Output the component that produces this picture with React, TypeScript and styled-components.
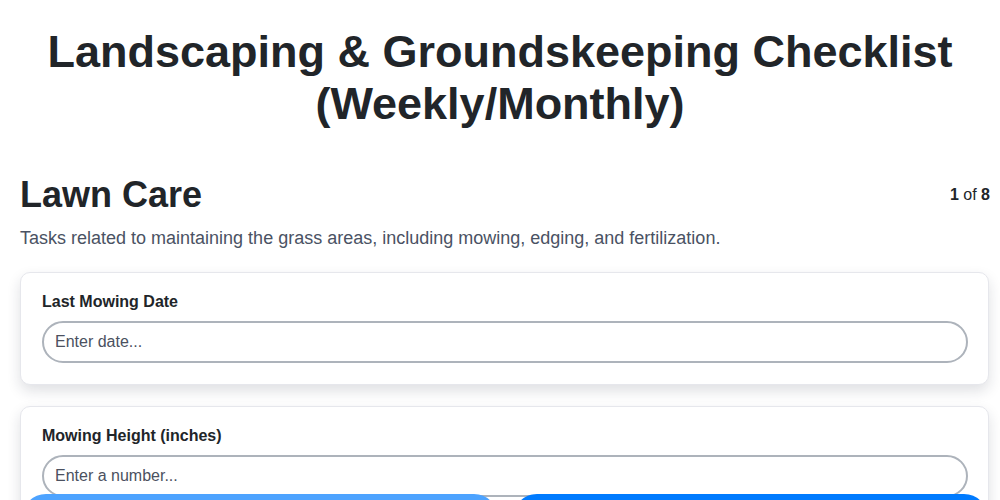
import React from 'react';
import styled, { createGlobalStyle } from 'styled-components';

const GlobalStyle = createGlobalStyle`
	* {
		box-sizing: border-box;
	}

	body {
		margin: 0;
		background: #ffffff;
		font-family: "Liberation Sans", Arial, sans-serif;
		color: #212529;
	}
`;

const Page = styled.div`
	padding: 26px 11px 80px 20px;
`;

const Title = styled.h1`
	margin: 0 9px 43px 0;
	text-align: center;
	font-size: 45px;
	line-height: 52px;
	font-weight: 700;
	color: #212529;
`;

const SectionHeader = styled.div`
	display: flex;
	justify-content: space-between;
	align-items: center;
`;

const SectionTitle = styled.h2`
	margin: 0;
	font-size: 36px;
	line-height: 43px;
	font-weight: 700;
`;

const Counter = styled.div`
	margin-right: -1px;
	font-size: 16px;
	color: #212529;

	& b {
		font-weight: 700;
	}
`;

const Description = styled.p`
	margin: 11px 0 23px;
	font-size: 18px;
	line-height: 22px;
	color: #4a5263;
`;

const FieldList = styled.div`
	display: flex;
	flex-direction: column;
	gap: 21px;
`;

const Card = styled.div`
	background: #ffffff;
	border: 1px solid #e6e7ec;
	border-radius: 10px;
	padding: 19px 20px 21px 21px;
	box-shadow: 0 6px 14px rgba(30, 35, 60, 0.14);
`;

const Label = styled.label`
	display: block;
	margin-bottom: 9px;
	font-size: 16px;
	line-height: 20px;
	font-weight: 700;
	color: #212529;
`;

const Input = styled.input`
	display: block;
	width: 100%;
	height: 42px;
	padding: 0 11px;
	border: 2px solid #adb3bb;
	border-radius: 21px;
	font-family: "Liberation Sans", Arial, sans-serif;
	font-size: 16px;
	color: #212529;
	background: #ffffff;
	outline: none;

	&::placeholder {
		color: #4b5160;
	}
`;

const Footer = styled.div`
	position: fixed;
	left: 22px;
	right: 12px;
	top: 494px;
	display: grid;
	grid-template-columns: 1fr 1fr;
	gap: 15px;
`;

const NavButton = styled.button<{ $disabled?: boolean }>`
	height: 48px;
	border: none;
	border-radius: 24px;
	background: ${(p) => (p.$disabled ? '#4da3ff' : '#007bff')};
	color: #ffffff;
	font-family: "Liberation Sans", Arial, sans-serif;
	font-size: 16px;
	font-weight: 700;
	cursor: ${(p) => (p.$disabled ? 'default' : 'pointer')};
`;

const fields = [
	{ label: 'Last Mowing Date', placeholder: 'Enter date...', type: 'text' },
	{ label: 'Mowing Height (inches)', placeholder: 'Enter a number...', type: 'text' },
	{ label: 'Edging Completed', placeholder: 'Enter details...', type: 'text' },
];

function App() {
	return (
		<Page>
			<GlobalStyle />
			<Title>Landscaping &amp; Groundskeeping Checklist (Weekly/Monthly)</Title>
			<SectionHeader>
				<SectionTitle>Lawn Care</SectionTitle>
				<Counter><b>1</b> of <b>8</b></Counter>
			</SectionHeader>
			<Description>
				Tasks related to maintaining the grass areas, including mowing, edging, and fertilization.
			</Description>
			<FieldList>
				{fields.map((field, index) => (
					<Card key={index}>
						<Label>{field.label}</Label>
						<Input type={field.type} placeholder={field.placeholder} />
					</Card>
				))}
			</FieldList>
			<Footer>
				<NavButton $disabled>Previous</NavButton>
				<NavButton>Next</NavButton>
			</Footer>
		</Page>
	);
}

export default App;
